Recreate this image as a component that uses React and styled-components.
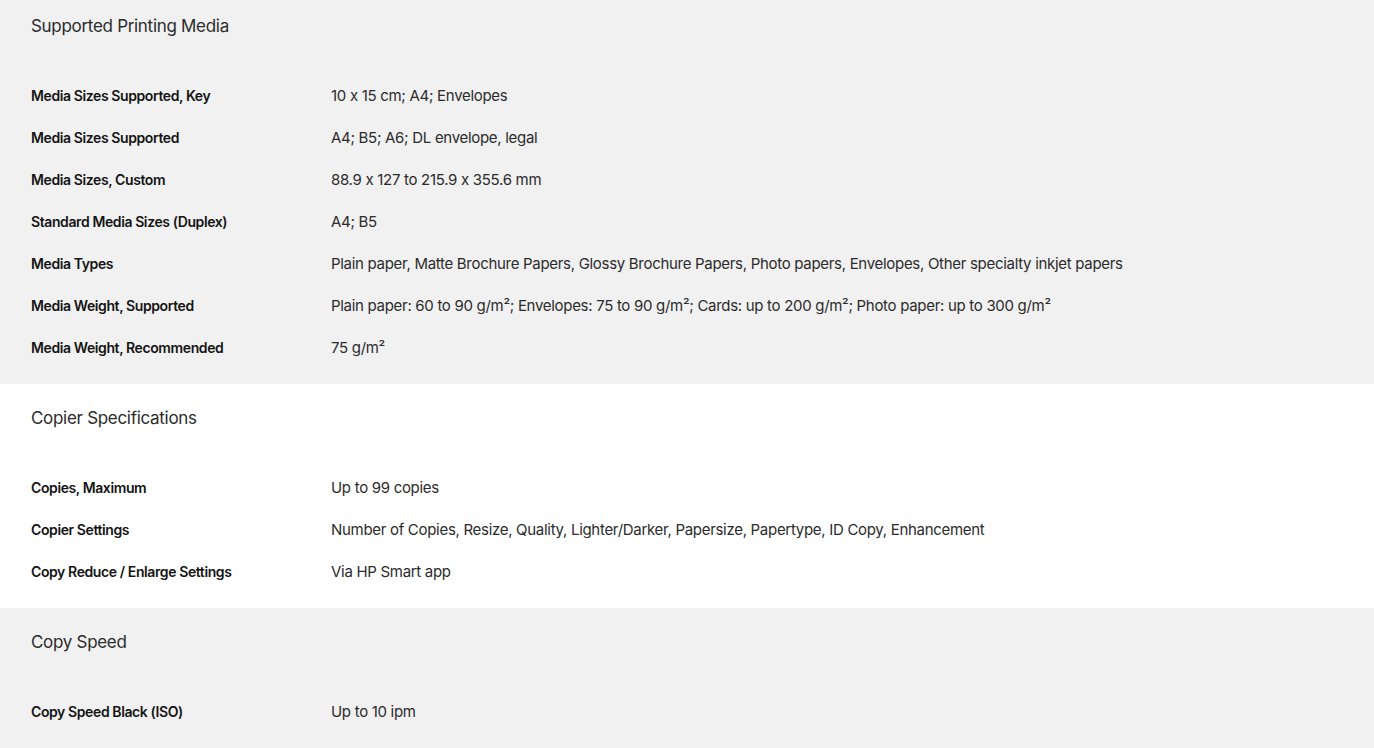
import React from "react";
import styled, { createGlobalStyle } from "styled-components";

const GlobalStyle = createGlobalStyle`
  html, body {
    margin: 0;
    padding: 0;
    background: #ffffff;
    font-family: Inter, "Liberation Sans", sans-serif;
    color: #1a1a1a;
  }
`;

const Page = styled.main`
  margin-top: -8px;
`;

const Section = styled.section`
  background: ${({ $shaded }) => ($shaded ? "#f1f1f1" : "#ffffff")};
  padding: 22px 31px 16px 31px;
`;

const Heading = styled.h2`
  margin: 0 0 36px 0;
  font-size: 17px;
  line-height: 24px;
  font-weight: 400;
  color: #2b2b2b;
  letter-spacing: -0.3px;
`;

const SpecRow = styled.div`
  display: grid;
  grid-template-columns: 300px 1fr;
  align-items: center;
  height: 42px;
`;

const Label = styled.div`
  font-size: 14px;
  font-weight: 600;
  color: #141414;
  letter-spacing: -0.4px;
`;

const Value = styled.div`
  font-size: 15px;
  font-weight: 400;
  color: #2b2b2b;
  letter-spacing: -0.3px;
`;

const sections = [
  {
    title: "Supported Printing Media",
    shaded: true,
    rows: [
      ["Media Sizes Supported, Key", "10 x 15 cm; A4; Envelopes"],
      ["Media Sizes Supported", "A4; B5; A6; DL envelope, legal"],
      ["Media Sizes, Custom", "88.9 x 127 to 215.9 x 355.6 mm"],
      ["Standard Media Sizes (Duplex)", "A4; B5"],
      [
        "Media Types",
        "Plain paper, Matte Brochure Papers, Glossy Brochure Papers, Photo papers, Envelopes, Other specialty inkjet papers",
      ],
      [
        "Media Weight, Supported",
        "Plain paper: 60 to 90 g/m²; Envelopes: 75 to 90 g/m²; Cards: up to 200 g/m²; Photo paper: up to 300 g/m²",
      ],
      ["Media Weight, Recommended", "75 g/m²"],
    ],
  },
  {
    title: "Copier Specifications",
    shaded: false,
    rows: [
      ["Copies, Maximum", "Up to 99 copies"],
      [
        "Copier Settings",
        "Number of Copies, Resize, Quality, Lighter/Darker, Papersize, Papertype, ID Copy, Enhancement",
      ],
      ["Copy Reduce / Enlarge Settings", "Via HP Smart app"],
    ],
  },
  {
    title: "Copy Speed",
    shaded: true,
    rows: [["Copy Speed Black (ISO)", "Up to 10 ipm"]],
  },
];

const App = () => {
  return (
    <Page>
      <GlobalStyle />
      {sections.map((section) => (
        <Section key={section.title} $shaded={section.shaded}>
          <Heading>{section.title}</Heading>
          {section.rows.map(([label, value]) => (
            <SpecRow key={label}>
              <Label>{label}</Label>
              <Value>{value}</Value>
            </SpecRow>
          ))}
        </Section>
      ))}
    </Page>
  );
};

export default App;
